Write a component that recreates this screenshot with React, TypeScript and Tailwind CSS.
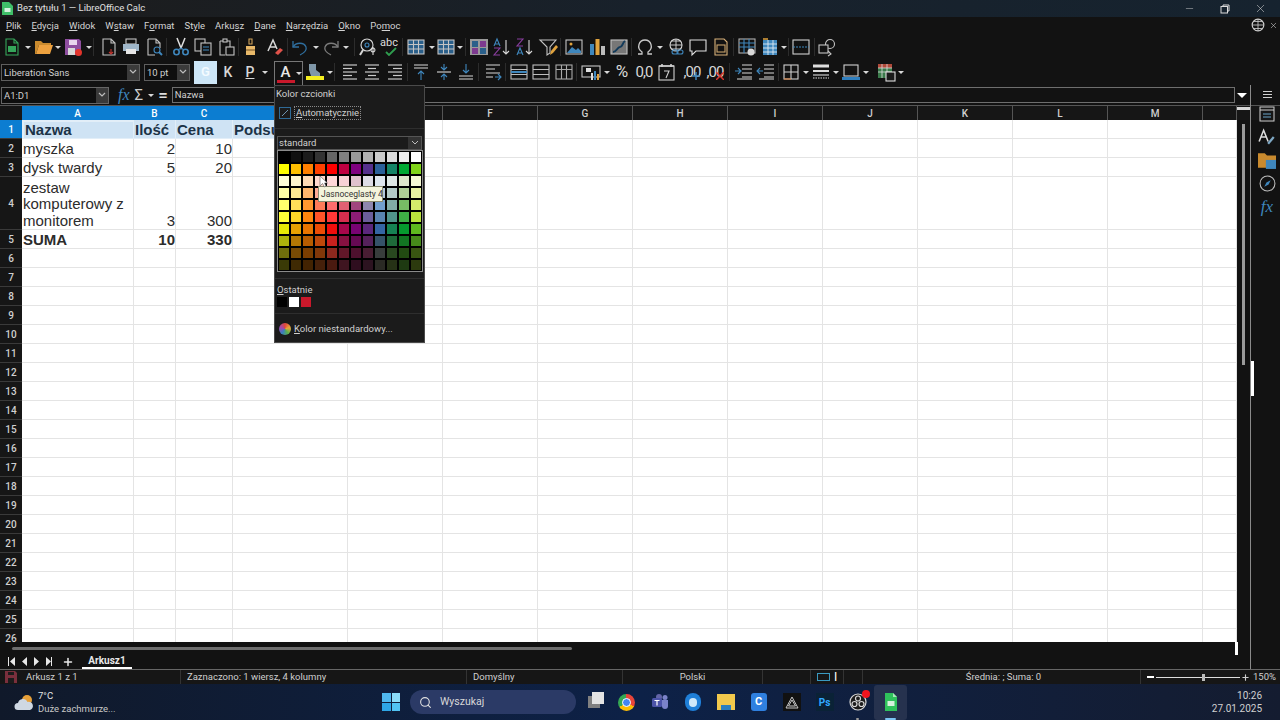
import type { ReactNode } from 'react'
import { Minus, X, Plus, Search } from 'lucide-react'

const ui = "font-['Roboto',sans-serif]"
const sheet = "font-['Liberation_Sans',sans-serif]"

const L = '#c4c4c4'
const B = '#3f87bd'

function Ico({ children, size = 20 }: { children: ReactNode; size?: number }) {
  return (
    <svg width={size} height={size} viewBox="0 0 20 20" fill="none" strokeWidth="1.1" stroke={L}>
      {children}
    </svg>
  )
}

function Tool({ className = '', children }: { className?: string; children: ReactNode }) {
  return <div className={`w-[22px] h-[22px] shrink-0 flex items-center justify-center ${className}`}>{children}</div>
}

function Arrow({ className = '' }: { className?: string }) {
  return (
    <div className={`w-[6px] h-[22px] shrink-0 flex items-center justify-center ${className}`}>
      <div className="w-0 h-0 border-l-[3px] border-r-[3px] border-t-[3px] border-l-transparent border-r-transparent border-t-[#d8d8d8]" />
    </div>
  )
}

function Sep({ className = '' }: { className?: string }) {
  return <div className={`w-px h-[18px] mx-px shrink-0 bg-[#2c2c2c] ${className}`} />
}

const Doc = ({ c = L }: { c?: string }) => <path d="M4 2h8l4 4v12H4z M12 2v4h4" stroke={c} />

function Lines({ rows }: { rows: [number, number][] }) {
  return (
    <Ico>
      {rows.map(([a, b], i) => (
        <path key={i} d={`M${a} ${3 + i * 3.5}H${b}`} strokeWidth="1.2" stroke="#c8c8c8" />
      ))}
    </Ico>
  )
}

function TableIco({ head = L, fill }: { head?: string; fill?: string }) {
  return (
    <Ico>
      {fill && <rect x="2" y="3" width="16" height="14" fill={fill} stroke="none" />}
      <rect x="2" y="3" width="16" height="14" stroke={L} />
      <path d="M2 7.5h16M2 12h16M7.5 3v14M12.5 3v14" stroke={head} />
    </Ico>
  )
}

const swatches = [
  ['#000000', '#111111', '#1c1c1c', '#333333', '#666666', '#808080', '#999999', '#b2b2b2', '#cccccc', '#dddddd', '#eeeeee', '#ffffff'],
  ['#ffff00', '#ffbf00', '#ff8000', '#ff4000', '#ff0000', '#bf0041', '#800080', '#55308d', '#2a6099', '#158466', '#00a933', '#81d41a'],
  ['#ffffd7', '#fff5ce', '#ffdbb6', '#ffd8ce', '#ffd7d7', '#f7d1d5', '#e0c2cd', '#dedce6', '#dee6ef', '#dee7e5', '#dde8cb', '#f6f9d4'],
  ['#ffffa6', '#ffe994', '#ffb66c', '#ffaa95', '#ffa6a6', '#ec9ba4', '#bf819e', '#b7b3ca', '#b4c7dc', '#b3cac7', '#afd095', '#e8f2a1'],
  ['#ffff6d', '#ffde59', '#ff972f', '#ff7b59', '#ff6d6d', '#e16173', '#a1467e', '#8e86ae', '#729fcf', '#81aca6', '#77bc65', '#d4ea6b'],
  ['#ffff38', '#ffd428', '#ff860d', '#ff5429', '#ff3838', '#d62e4e', '#8d1d75', '#6b5e9b', '#5983b0', '#50938a', '#3faf46', '#bbe33d'],
  ['#e6e905', '#e8a202', '#ea7500', '#ed4c05', '#f10d0c', '#a7074b', '#780373', '#5b277d', '#3465a4', '#168253', '#069a2e', '#5eb91e'],
  ['#acb20c', '#b47804', '#b85c00', '#be480a', '#c9211e', '#861141', '#650953', '#55215b', '#355269', '#1e6a39', '#127622', '#468a1a'],
  ['#706e0c', '#784b04', '#7b3d00', '#813709', '#8d281e', '#611729', '#4e102d', '#481d32', '#383d3c', '#28471f', '#224b12', '#395511'],
  ['#3a3a06', '#3f2a03', '#422302', '#45200a', '#4a1a10', '#3f1520', '#2f0e1f', '#2c1320', '#2a2a24', '#263216', '#1e3a12', '#2c3a0e'],
]

const colWidths = ['w-[112px]', 'w-[42px]', 'w-[57px]', 'w-[115px]', 'w-[95px]', 'w-[95px]', 'w-[95px]', 'w-[95px]', 'w-[95px]', 'w-[95px]', 'w-[95px]', 'w-[95px]', 'w-[95px]', 'w-[34px]']
const colNames = ['A', 'B', 'C', 'D', 'E', 'F', 'G', 'H', 'I', 'J', 'K', 'L', 'M', '']

type Row = { n: number; h: string; cells?: string[]; bold?: boolean }
const rows: Row[] = [
  { n: 1, h: 'h-[19px]', cells: ['Nazwa', 'Ilość', 'Cena', 'Podsumowanie'], bold: true },
  { n: 2, h: 'h-[19px]', cells: ['myszka', '2', '10'] },
  { n: 3, h: 'h-[19px]', cells: ['dysk twardy', '5', '20'] },
  { n: 4, h: 'h-[53px]', cells: ['zestaw komputerowy z monitorem', '3', '300'] },
  { n: 5, h: 'h-[19px]', cells: ['SUMA', '10', '330'], bold: true },
  ...Array.from({ length: 21 }, (_, i) => ({ n: i + 6, h: 'h-[19px]' })),
]

function Combo({ className, value, btn }: { className: string; value: string; btn: string }) {
  return (
    <div className={`h-[17px] flex border border-[#5e5e5e] bg-[#0e0e0e] text-[9.5px] text-[#d0d0d0] leading-[15px] ${className}`}>
      <div className="flex-1 pl-[2px] overflow-hidden whitespace-nowrap">{value}</div>
      <div className={`${btn} bg-[#3a3a3a] flex items-center justify-center`}>
        <svg width="8" height="6" viewBox="0 0 8 6" fill="none" stroke="#bdbdbd" strokeWidth="1.2"><path d="M1 1l3 3 3-3" /></svg>
      </div>
    </div>
  )
}

function ToolbarOne() {
  return (
    <div className="h-[24px] pl-px flex items-center bg-[#121212]">
      <Tool>
        <Ico><Doc c="#35a55a" /><rect x="6" y="9" width="8" height="6" fill="#35a55a" stroke="none" /></Ico>
      </Tool>
      <Arrow className="ml-[2px]" />
      <Tool className="ml-[2px]">
        <Ico><path d="M1 4h6l2 2h8v2H5L2 17H1z" fill="#c98a2e" stroke="none" /><path d="M5 8h14l-3 9H2z" fill="#eda13f" stroke="none" /></Ico>
      </Tool>
      <Arrow />
      <Tool className="ml-px">
        <Ico>
          <path d="M2 2h14l2 2v14H2z" fill="#8f4fa0" stroke="none" />
          <rect x="6" y="3" width="8" height="5" fill="#e9d7ee" stroke="none" />
          <rect x="5" y="11" width="7" height="7" fill="#d8d8d8" stroke="none" />
          <circle cx="15.5" cy="15.5" r="3.5" fill="#e2342b" stroke="none" />
        </Ico>
      </Tool>
      <Arrow className="ml-[2px]" />
      <Sep />
      <Tool className="ml-[3px]">
        <Ico><Doc /><path d="M12 12v5M10 15l2 2 2-2" stroke="#c2352f" /></Ico>
      </Tool>
      <Tool>
        <Ico>
          <rect x="5" y="2" width="10" height="5" stroke={L} />
          <path d="M2 7h16v7h-3v-2H5v2H2z" fill="#9fb6c9" stroke="none" />
          <rect x="5" y="12" width="10" height="5" fill="#e6e6e6" stroke="none" />
        </Ico>
      </Tool>
      <Tool className="ml-px">
        <Ico><path d="M4 2h8l4 4v5M4 2v16h7 M12 2v4h4" /><circle cx="13" cy="13" r="3" stroke={B} /><path d="M15 15l3 3" stroke={B} strokeWidth="2" /></Ico>
      </Tool>
      <Sep />
      <Tool className="ml-[2px]">
        <Ico>
          <path d="M6 1l4 10 4-10" stroke="#e0e0e0" strokeWidth="1.5" />
          <circle cx="5.5" cy="15" r="2.7" stroke={B} strokeWidth="1.6" />
          <circle cx="14.5" cy="15" r="2.7" stroke={B} strokeWidth="1.6" />
          <path d="M10 11l-3 2M10 11l3 2" stroke={B} />
        </Ico>
      </Tool>
      <Tool>
        <Ico>
          <rect x="2" y="2" width="10" height="12" />
          <rect x="8" y="6" width="10" height="12" fill="#121212" />
          <path d="M10 10h6M10 13h6" stroke={B} />
        </Ico>
      </Tool>
      <Tool className="ml-px">
        <Ico>
          <path d="M4 4h10v6M4 4v14h5" />
          <rect x="7" y="2" width="4" height="3" fill="#121212" />
          <rect x="10" y="10" width="8" height="8" fill="#121212" />
        </Ico>
      </Tool>
      <Sep />
      <Tool>
        <Ico>
          <path d="M8 2h3v5H8z" stroke="#cfa25a" />
          <path d="M5 9h9v9H5z" fill="#e8b96a" stroke="none" />
          <path d="M5 13h9" stroke="#7a5a2a" />
        </Ico>
      </Tool>
      <Tool className="ml-[2px]">
        <Ico>
          <path d="M3 14L8 3l4 9M5 10h6" stroke="#d8d8d8" strokeWidth="1.5" />
          <path d="M10 16l5-5 3 2-5 5z" fill="#e0524a" stroke="none" />
        </Ico>
      </Tool>
      <Sep />
      <Tool>
        <Ico><path d="M3 4v6h6" stroke="#2f6f9f" strokeWidth="1.3" /><path d="M3 10c3-5 11-5 13 0 1 3-2 6-6 8" stroke="#2f6f9f" strokeWidth="1.3" /></Ico>
      </Tool>
      <Arrow className="ml-[2px]" />
      <Tool className="ml-px">
        <Ico><path d="M17 4v6h-6" stroke="#7c7c7c" strokeWidth="1.3" /><path d="M17 10c-3-5-11-5-13 0-1 3 2 6 6 8" stroke="#7c7c7c" strokeWidth="1.3" /></Ico>
      </Tool>
      <Arrow className="ml-px" />
      <Sep className="ml-[5px]" />
      <Tool className="ml-px">
        <Ico>
          <circle cx="9" cy="8" r="6" stroke="#d8d8d8" />
          <path d="M5 13l-3 5" strokeWidth="2" stroke="#d8d8d8" />
          <circle cx="9" cy="8" r="2" stroke={B} />
          <path d="M15 10v8M15 15a2 2 0 10-.1 0" stroke="#d8d8d8" />
        </Ico>
      </Tool>
      <Tool>
        <div className="relative w-[20px] h-[20px]">
          <span className={`${ui} absolute -top-[1px] left-0 text-[11px] text-[#dddddd] leading-[14px]`}>abc</span>
          <svg className="absolute left-[5px] top-[10px]" width="12" height="9" viewBox="0 0 12 9" fill="none" stroke="#2f9e4f" strokeWidth="1.8"><path d="M1 5l3 3 7-7" /></svg>
        </div>
      </Tool>
      <Sep className="ml-px" />
      <Tool className="ml-px"><TableIco fill="#2a5f8a" /></Tool>
      <Arrow className="ml-[2px]" />
      <Tool><TableIco fill="#2a5f8a" /></Tool>
      <Arrow />
      <Sep className="ml-[2px]" />
      <Tool className="ml-px">
        <Ico>
          <rect x="1" y="2" width="18" height="16" fill="#9a9a9a" stroke="none" />
          <rect x="3" y="4" width="6" height="6" fill="#2a5f8a" stroke="none" />
          <rect x="11" y="4" width="6" height="6" fill="#7d3a8f" stroke="none" />
          <rect x="3" y="11" width="6" height="6" fill="#7d3a8f" stroke="none" />
          <rect x="11" y="11" width="6" height="6" fill="#2a5f8a" stroke="none" />
        </Ico>
      </Tool>
      <Tool className="ml-px">
        <Ico>
          <path d="M2 9l3-7 3 7M3 7h4" stroke={B} />
          <path d="M2 11h6l-6 7h6" stroke="#8a3ea0" />
          <path d="M14 3v14M11 14l3 3 3-3" stroke="#d8d8d8" />
        </Ico>
      </Tool>
      <Tool className="ml-px">
        <Ico>
          <path d="M2 2h6L2 9h6" stroke="#8a3ea0" />
          <path d="M2 18l3-7 3 7M3 16h4" stroke={B} />
          <path d="M14 3v14M11 14l3 3 3-3" stroke="#d8d8d8" />
        </Ico>
      </Tool>
      <Tool className="ml-px">
        <Ico>
          <path d="M2 3h16l-6 7v6l-3 2v-8z" stroke="#c4c4c4" />
          <path d="M18 8l-5 6-1 4 3-2 5-6z" fill="#e0a33e" stroke="none" />
        </Ico>
      </Tool>
      <Sep />
      <Tool className="ml-px">
        <Ico>
          <rect x="2" y="3" width="16" height="14" stroke="#c4c4c4" />
          <path d="M3 16l5-6 4 3 2-2 3 3v2H3z" fill={B} stroke="none" />
          <circle cx="7" cy="7" r="1.5" fill="#e0a33e" stroke="none" />
        </Ico>
      </Tool>
      <Tool className="ml-px">
        <Ico>
          <rect x="3" y="7" width="4" height="11" fill={B} stroke="none" />
          <rect x="8.5" y="2" width="4" height="16" fill="#e0a33e" stroke="none" />
          <rect x="14" y="9" width="4" height="9" fill="#bcbcbc" stroke="none" />
        </Ico>
      </Tool>
      <Tool>
        <Ico>
          <rect x="2" y="3" width="16" height="14" fill="#777777" stroke="#c4c4c4" />
          <path d="M4 15c4 0 4-5 7-5s2-4 5-6" stroke="#123a5a" strokeWidth="2" />
        </Ico>
      </Tool>
      <Sep />
      <Tool className="ml-px">
        <Ico><path d="M3 17h4v-2c-6-4-3-12 3-12s9 8 3 12v2h4" stroke="#c9c9c9" strokeWidth="1.3" /></Ico>
      </Tool>
      <Arrow className="ml-px" />
      <Tool className="ml-[2px]">
        <Ico>
          <circle cx="10" cy="8" r="6" stroke="#d8d8d8" />
          <path d="M4 8h12M10 2v12M6 4h8M6 12h8" stroke="#d8d8d8" strokeWidth="0.9" />
          <rect x="6" y="13" width="6" height="4" rx="2" stroke={B} />
          <rect x="11" y="13" width="6" height="4" rx="2" stroke={B} />
        </Ico>
      </Tool>
      <Tool>
        <Ico><path d="M2 3h16v11H8l-4 4v-4H2z" stroke="#e0e0e0" /></Ico>
      </Tool>
      <Tool className="ml-px">
        <Ico><path d="M4 2h9l3 3v13H4z" stroke="#d9b27a" /><rect x="6" y="8" width="8" height="7" fill="#111111" stroke="#c9a26a" /></Ico>
      </Tool>
      <Sep />
      <Tool className="ml-px">
        <Ico>
          <rect x="2" y="2" width="16" height="14" stroke="#b0b0b0" />
          <path d="M2 6h16M2 10h16M7 2v14M12 2v14" stroke={B} />
          <circle cx="14" cy="15" r="3.5" fill="#d8d8d8" stroke="none" />
        </Ico>
      </Tool>
      <Tool className="ml-px">
        <Ico>
          <rect x="3" y="3" width="14" height="15" fill="#3f87bd" stroke="none" />
          <path d="M3 7h14M3 11h14M3 15h14M8 3v15M13 3v15" stroke="#dfe9f0" strokeWidth="0.9" />
          <path d="M3 2h5" stroke="#e0a33e" strokeWidth="1.5" />
        </Ico>
      </Tool>
      <Arrow />
      <Sep className="ml-px" />
      <Tool>
        <Ico><rect x="2" y="3" width="16" height="14" stroke="#d0d0d0" /><path d="M2 10h16" stroke={B} strokeDasharray="2 1" /></Ico>
      </Tool>
      <Sep className="ml-[2px]" />
      <Tool>
        <Ico><circle cx="13" cy="7" r="4.5" /><rect x="2" y="8" width="9" height="8" fill="#121212" /><path d="M11 14l3 3-3 2" /></Ico>
      </Tool>
    </div>
  )
}

const Merge = ({ mid }: { mid?: string }) => (
  <Ico>
    <rect x="2" y="3" width="16" height="14" stroke="#bdbdbd" />
    <path d="M2 7.5h16M2 12.5h16" stroke="#bdbdbd" />
    {mid && <path d="M2 10h16" stroke={mid} strokeWidth="2" />}
  </Ico>
)

function ToolbarTwo() {
  return (
    <div className={`${ui} h-[26px] pl-px flex items-center bg-[#121212]`}>
      <Combo className="w-[139px]" value="Liberation Sans" btn="w-[12px]" />
      <Combo className="w-[46px] ml-[4px]" value="10 pt" btn="w-[12px]" />
      <div className="w-[23px] h-[23px] ml-[4px] bg-[#cde6f7] flex items-center justify-center text-[13px] font-semibold text-[#f4fbff]">G</div>
      <Tool><span className="text-[14px] font-medium text-[#d8d8d8]">K</span></Tool>
      <Tool><span className="text-[14px] font-medium text-[#d8d8d8] underline">P</span></Tool>
      <Arrow className="ml-px" />
      <div className="w-[29px] h-[24px] ml-[6px] mt-[2px] border-t border-l border-r border-[#777777] flex items-center pl-[1px] shrink-0">
        <div className="w-[20px] flex flex-col items-center">
          <span className="text-[15px] leading-[14px] font-medium text-[#e8e8e8]">A</span>
          <div className="w-[18px] h-[3px] mt-[1px] bg-[#c9182b]" />
        </div>
        <Arrow className="ml-[1px]" />
      </div>
      <Tool className="ml-px">
        <Ico>
          <path d="M4 2h7v6l4 3v3H6L4 8z" fill="#7f97a8" stroke="none" />
          <rect x="1" y="14" width="18" height="4" fill="#f4ee1f" stroke="none" />
        </Ico>
      </Tool>
      <Arrow className="ml-[1px]" />
      <Sep className="ml-px" />
      <Tool className="ml-[3px]"><Lines rows={[[3, 17], [3, 12], [3, 17], [3, 12], [3, 17]]} /></Tool>
      <Tool><Lines rows={[[3, 17], [6, 14], [3, 17], [6, 14], [3, 17]]} /></Tool>
      <Tool className="ml-px"><Lines rows={[[3, 17], [8, 17], [3, 17], [8, 17], [3, 17]]} /></Tool>
      <Sep className="ml-[1px]" />
      <Tool className="ml-px">
        <Ico><path d="M3 3h14M3 6h14" stroke="#d8d8d8" /><path d="M10 18V9M7 12l3-3 3 3" stroke={B} /></Ico>
      </Tool>
      <Tool className="ml-px">
        <Ico><path d="M3 10h14" stroke="#d8d8d8" /><path d="M10 2v6M7 5l3 3 3-3M10 18v-6M7 15l3-3 3 3" stroke={B} /></Ico>
      </Tool>
      <Tool>
        <Ico><path d="M3 14h14M3 17h14" stroke="#d8d8d8" /><path d="M10 2v9M7 8l3 3 3-3" stroke={B} /></Ico>
      </Tool>
      <Sep className="ml-px" />
      <Tool className="ml-[2px]">
        <Ico><path d="M3 3h14M3 7h9M3 11h14M3 15h7" stroke="#d8d8d8" strokeWidth="1.2" /><path d="M12 15h6M15 12l3 3-3 3" stroke={B} /></Ico>
      </Tool>
      <Sep className="ml-px" />
      <Tool className="ml-px"><Merge mid="#3f87bd" /></Tool>
      <Tool><Merge /></Tool>
      <Tool className="ml-px">
        <Ico>
          <rect x="2" y="3" width="16" height="14" stroke="#a8a8a8" />
          <path d="M2 7.5h16M7.5 3v14M12.5 3v14" stroke="#a8a8a8" />
        </Ico>
      </Tool>
      <Sep className="ml-px" />
      <Tool className="ml-[2px]">
        <Ico>
          <rect x="1" y="4" width="18" height="11" stroke="#c4c4c4" />
          <rect x="5" y="6" width="5" height="4" fill="#e0e0e0" stroke="none" />
          <rect x="10" y="11" width="2" height="7" fill="#e0e0e0" stroke="none" />
          <rect x="13" y="9" width="2" height="9" fill={B} stroke="none" />
          <rect x="16" y="12" width="2" height="6" fill="#e0a33e" stroke="none" />
        </Ico>
      </Tool>
      <Arrow className="ml-[2px]" />
      <Tool className="ml-px"><span className="text-[17px] text-[#d8d8d8]">%</span></Tool>
      <Tool><span className="text-[15px] tracking-[-1px] text-[#d8d8d8]">0,0</span></Tool>
      <Tool>
        <Ico>
          <rect x="3" y="4" width="15" height="14" stroke="#cfcfcf" />
          <path d="M3 4h15M6 2v3M15 2v3" stroke="#cfcfcf" strokeWidth="1.6" />
          <path d="M8 9h5l-3 7" stroke="#cfcfcf" />
        </Ico>
      </Tool>
      <Tool className="ml-[4px]">
        <div className="relative">
          <span className="text-[15px] tracking-[-1px] text-[#d8d8d8]">,00</span>
          <svg className="absolute right-0 top-[12px]" width="8" height="8" viewBox="0 0 8 8" stroke={B} strokeWidth="1.5"><path d="M4 0v8M0 4h8" /></svg>
        </div>
      </Tool>
      <Tool className="ml-px">
        <div className="relative">
          <span className="text-[15px] tracking-[-1px] text-[#d8d8d8]">,00</span>
          <svg className="absolute -right-px top-[12px]" width="8" height="8" viewBox="0 0 8 8" stroke="#d9362d" strokeWidth="1.5"><path d="M0 0l8 8M8 0L0 8" /></svg>
        </div>
      </Tool>
      <Sep className="ml-[3px]" />
      <Tool className="ml-[2px]">
        <Ico><path d="M8 3h10M8 7h10M8 11h10M8 15h10M3 17h15" stroke="#d8d8d8" /><path d="M1 9h5M4 6l3 3-3 3" stroke={B} /></Ico>
      </Tool>
      <Tool>
        <Ico><path d="M8 3h10M8 7h10M8 11h10M8 15h10M3 17h15" stroke="#d8d8d8" /><path d="M7 9H1M4 6L1 9l3 3" stroke={B} /></Ico>
      </Tool>
      <Sep className="ml-px" />
      <Tool>
        <Ico><rect x="3" y="3" width="14" height="14" stroke="#d0d0d0" /><path d="M10 3v14M3 10h14" stroke="#d0d0d0" /><path d="M3 17h7" stroke="#d27a3a" /></Ico>
      </Tool>
      <Arrow className="ml-px" />
      <Tool className="ml-px">
        <Ico><path d="M2 4h16" strokeWidth="3" stroke="#dedede" /><path d="M2 9h16" strokeWidth="2" stroke="#dedede" /><path d="M2 13h16" stroke="#dedede" /><path d="M2 16h16" strokeDasharray="1.5 1" stroke="#dedede" /></Ico>
      </Tool>
      <Arrow className="ml-px" />
      <Tool className="ml-[1px]">
        <Ico><rect x="3" y="3" width="14" height="11" stroke="#d0d0d0" /><rect x="1" y="15" width="18" height="3" fill="#2f7fbf" stroke="none" /></Ico>
      </Tool>
      <Arrow className="ml-[1px]" />
      <Tool className="ml-[6px]">
        <Ico>
          <rect x="2" y="2" width="14" height="14" fill="#3a7a4a" stroke="none" />
          <path d="M2 2h14v4H2z" fill="#b04a3a" stroke="none" />
          <path d="M2 6h14M2 10h14M6 2v14M11 2v14" stroke="#dddddd" strokeWidth="0.8" />
          <rect x="10" y="10" width="9" height="9" fill="#1a1a1a" stroke="#dddddd" />
        </Ico>
      </Tool>
      <Arrow className="ml-[1px]" />
    </div>
  )
}

function Sheet() {
  return (
    <div className="w-[1237px] h-[522px] overflow-hidden bg-white">
      {rows.map((r) => (
        <div key={r.n} className={`${r.h} flex`}>
          <div
            className={`w-[22px] shrink-0 flex items-center justify-center text-[10px] font-medium border-b border-[#3a3a3a] ${ui} ${
              r.n === 1 ? 'bg-[#0c7dd1] text-white' : 'bg-[#161616] text-[#d0d0d0]'
            }`}
          >
            {r.n}
          </div>
          {colWidths.map((w, i) => {
            const text = r.cells?.[i]
            const selected = r.n === 1 && i < 4
            const wrap = r.n === 4 && i === 0
            return (
              <div
                key={i}
                className={`${w} shrink-0 flex items-end border-r border-b ${sheet} text-[15px] overflow-hidden ${
                  wrap ? 'whitespace-normal leading-[16.5px] pl-px' : 'whitespace-nowrap leading-[17.5px] pl-px'
                } ${selected ? 'bg-[#cfe3f4] text-[#1c3347] border-[#e2eef8]' : 'text-[#2c2c2c] border-[#e4e4e4]'} ${r.bold ? 'font-bold' : ''} ${
                  (i === 1 || i === 2) && r.n !== 1 ? 'justify-end' : ''
                } ${r.n === 1 && i === 0 ? 'border-2 border-[#1b76c0]' : ''}`}
              >
                {text}
              </div>
            )
          })}
        </div>
      ))}
    </div>
  )
}

function ColorPopup() {
  return (
    <div className={`${ui} absolute left-[274px] top-[85px] w-[151px] h-[258px] bg-[#1b1b1b] border border-[#4a4a4a] text-[9.5px] text-[#d0d0d0] leading-[14px]`}>
      <div className="pl-px pt-px">Kolor czcionki</div>
      <div className="mt-[5px] ml-[4px] flex items-center gap-[3px]">
        <div className="w-[12px] h-[12px] border border-[#2f6a96] flex items-center justify-center">
          <svg width="8" height="8" viewBox="0 0 8 8" stroke="#6e94b0"><path d="M1 7l6-6" /></svg>
        </div>
        <span className="px-px border border-dotted border-[#8a8a8a] leading-[12px]"><u>A</u>utomatycznie</span>
      </div>
      <div className="mt-[8px] h-px bg-[#2e2e2e]" />
      <div className="mt-[7px] mx-[2px] h-[14px] flex border border-[#555555] leading-[12px]">
        <div className="flex-1 pl-px">standard</div>
        <div className="w-[13px] bg-[#333333] flex items-center justify-center">
          <svg width="8" height="6" viewBox="0 0 8 6" fill="none" stroke="#bdbdbd"><path d="M1 1l3 3 3-3" /></svg>
        </div>
      </div>
      <div className="mx-[2px] w-[146px] p-px border border-[#8a8a8a] bg-black grid grid-cols-12 gap-[2px]">
        {swatches.flat().map((c, i) => (
          <div key={i} className="h-[10px]" style={{ backgroundColor: c }} />
        ))}
      </div>
      <div className="mt-[6px] h-px bg-[#2e2e2e]" />
      <div className="mt-[4px] pl-[2px]"><u>O</u>statnie</div>
      <div className="ml-[2px] flex gap-[2px]">
        <div className="w-[10px] h-[10px] bg-black" />
        <div className="w-[10px] h-[10px] bg-white" />
        <div className="w-[10px] h-[10px] bg-[#c9182b]" />
      </div>
      <div className="mt-[6px] h-px bg-[#2e2e2e]" />
      <div className="mt-[8px] ml-[4px] flex items-center gap-[3px]">
        <div className="w-[12px] h-[12px] rounded-full bg-[conic-gradient(#e0453a,#e8a53a,#5ab04a,#3a7fc0,#a04ab0,#e0453a)]" />
        <span><u>K</u>olor niestandardowy...</span>
      </div>
      <div className="absolute left-[43px] top-[100px] w-[65px] h-[16px] pl-[2px] bg-[#f4f4dc] border border-[#8a8a70] text-[#333333] text-[8.5px] leading-[14px] whitespace-nowrap">
        Jasnoceglasty 4
      </div>
      <svg className="absolute left-[44px] top-[89px]" width="9" height="13" viewBox="0 0 9 13">
        <path d="M1 1v10l2.5-2.5L5.5 12 7 11 5.5 8H8.5z" fill="#ffffff" stroke="#555555" strokeWidth="0.6" />
      </svg>
    </div>
  )
}

function TaskIcon({ className = '', children }: { className?: string; children: ReactNode }) {
  return <div className={`w-[33px] h-[35px] flex items-center justify-center shrink-0 relative ${className}`}>{children}</div>
}

function Taskbar() {
  return (
    <div className={`${ui} h-[36px] flex items-center bg-gradient-to-r from-[#10192a] via-[#0d2147] to-[#141c30] text-[#e6e6e6]`}>
      <div className="w-[376px] pl-[14px] flex items-center shrink-0">
        <svg width="20" height="18" viewBox="0 0 20 18">
          <circle cx="13" cy="7" r="5" fill="#e8a13a" />
          <path d="M4 17a3.5 3.5 0 010-7 5 5 0 019.5-1A4 4 0 0116 17z" fill="#cfd8e3" />
        </svg>
        <div className="ml-[4px] text-[9.5px] leading-[13px]">
          <div>7°C</div>
          <div className="text-[#c8c8c8]">Duże zachmurze...</div>
        </div>
      </div>
      <div className="w-[18px] h-[18px] ml-[6px] grid grid-cols-2 gap-[1px] shrink-0">
        <div className="bg-[#4fb8ee]" />
        <div className="bg-[#8bdcf8]" />
        <div className="bg-[#2ea6e6]" />
        <div className="bg-[#52c3f2]" />
      </div>
      <div className="w-[166px] h-[24px] ml-[10px] rounded-full bg-[#2b3a66] flex items-center pl-[9px] text-[10.5px] text-[#d8d8d8] shrink-0">
        <Search size={13} strokeWidth={2} className="text-[#e0e0e0]" />
        <span className="ml-[8px]">Wyszukaj</span>
      </div>
      <TaskIcon className="ml-px">
        <div className="w-[12px] h-[12px] bg-[#808080] relative">
          <div className="absolute -top-[4px] left-[4px] w-[12px] h-[12px] bg-[#e4e4e4]" />
        </div>
      </TaskIcon>
      <TaskIcon>
        <div className="w-[17px] h-[17px] rounded-full bg-[conic-gradient(#e8453a_0_33%,#fbbc05_33%_66%,#34a853_66%)] flex items-center justify-center">
          <div className="w-[9px] h-[9px] rounded-full bg-[#4285f4] border border-white" />
        </div>
      </TaskIcon>
      <TaskIcon>
        <svg width="18" height="16" viewBox="0 0 18 16" fill="#6264a7">
          <circle cx="14" cy="3.5" r="2.5" fill="#7b83c9" />
          <path d="M11 6h6v6a3 3 0 01-6 0z" fill="#7b83c9" />
          <circle cx="8" cy="3" r="3" />
          <rect x="1" y="4" width="10" height="9" rx="1.5" fill="#4b53a8" />
          <path d="M3.5 6.5h5M6 6.5v5" stroke="#ffffff" strokeWidth="1.2" />
        </svg>
      </TaskIcon>
      <TaskIcon>
        <div className="w-[16px] h-[18px] rounded-full bg-[#1f7fd8] flex items-center justify-center">
          <div className="w-[8px] h-[9px] rounded-full bg-[#cfe8fa]" />
        </div>
      </TaskIcon>
      <TaskIcon>
        <div className="w-[18px] h-[16px] bg-[#f2c94c] relative">
          <div className="absolute bottom-0 left-[4px] w-[10px] h-[5px] bg-[#2a7fc0]" />
        </div>
      </TaskIcon>
      <TaskIcon>
        <div className="w-[16px] h-[18px] rounded-[3px] bg-[#2f80e0] flex items-center justify-center text-[11px] font-bold text-white">C</div>
      </TaskIcon>
      <TaskIcon>
        <div className="w-[18px] h-[18px] bg-[#111111] flex items-center justify-center">
          <svg width="14" height="13" viewBox="0 0 14 13" fill="none" stroke="#c8c8c8"><path d="M7 1l6 11H1zM7 4l3.5 6h-7z" /></svg>
        </div>
      </TaskIcon>
      <TaskIcon>
        <div className="w-[18px] h-[18px] bg-[#0a2236] flex items-center justify-center text-[10px] font-bold text-[#31a8ff]">Ps</div>
      </TaskIcon>
      <TaskIcon>
        <svg width="18" height="18" viewBox="0 0 18 18" fill="none" stroke="#d8d8d8" strokeWidth="1.2">
          <circle cx="9" cy="9" r="8" fill="#1c1c1c" />
          <circle cx="9" cy="5.5" r="2.5" />
          <circle cx="5.5" cy="11" r="2.5" />
          <circle cx="12.5" cy="11" r="2.5" />
        </svg>
        <div className="absolute right-[4px] top-[5px] w-[8px] h-[8px] rounded-full bg-[#f0141e]" />
        <div className="absolute bottom-0 w-[3px] h-[2px] rounded-full bg-[#9a9a9a]" />
      </TaskIcon>
      <TaskIcon className="bg-[#26324e] rounded-[3px]">
        <svg width="14" height="20" viewBox="0 0 14 20">
          <path d="M1 1h8l4 4v14H1z" fill="#2fc25b" />
          <path d="M9 1l4 4H9z" fill="#a8e8b8" />
          <rect x="3.5" y="9" width="7" height="5" fill="#d6f2de" />
        </svg>
        <div className="absolute bottom-0 w-[11px] h-[2px] rounded-full bg-[#7cc4f2]" />
      </TaskIcon>
      <div className="ml-auto mr-[18px] text-right text-[10px] leading-[13px] text-[#d0d0d0]">
        <div>10:26</div>
        <div>27.01.2025</div>
      </div>
    </div>
  )
}

export default function App() {
  return (
    <div className={`${ui} relative w-[1280px] h-[720px] flex flex-col overflow-hidden bg-[#121212] text-[#d8d8d8]`}>
      {/* title bar */}
      <div className="h-[17px] flex items-center bg-gradient-to-r from-[#1c1c1c] via-[#18212b] to-[#16232f] text-[9.5px]">
        <svg className="ml-[2px]" width="11" height="13" viewBox="0 0 11 13">
          <path d="M0 0h7l4 4v9H0z" fill="#3fbf68" />
          <rect x="2.5" y="6" width="6" height="4" fill="#d6f2de" />
        </svg>
        <span className="ml-[4px] text-[#e0e0e0]">Bez tytułu 1 — LibreOffice Calc</span>
        <div className="ml-auto flex items-center text-[#dcdcdc]">
          <Minus size={11} strokeWidth={1} />
          <svg className="ml-[25px]" width="10" height="10" viewBox="0 0 10 10" fill="none" stroke="#dcdcdc"><rect x="1" y="2.5" width="6.5" height="6.5" /><path d="M3 2.5V1h6v6H7.5" /></svg>
          <X className="ml-[24px] mr-[13px]" size={13} strokeWidth={1} />
        </div>
      </div>
      {/* menu */}
      <div className="h-[18px] pl-[6px] flex items-center gap-[10px] bg-[#121212] text-[9.5px] text-[#d4d4d4] relative">
        <span><u>P</u>lik</span>
        <span><u>E</u>dycja</span>
        <span><u>W</u>idok</span>
        <span>W<u>s</u>taw</span>
        <span>F<u>o</u>rmat</span>
        <span>St<u>y</u>le</span>
        <span>Arku<u>s</u>z</span>
        <span><u>D</u>ane</span>
        <span><u>N</u>arzędzia</span>
        <span><u>O</u>kno</span>
        <span>Po<u>m</u>oc</span>
        <div className="absolute right-[2px] top-px flex items-center gap-[4px]">
          <svg width="14" height="14" viewBox="0 0 12 12" fill="none" stroke="#cfcfcf"><circle cx="6" cy="6" r="5" /><path d="M1 6h10M6 1v10M2 3h8M2 9h8" strokeWidth="0.7" /></svg>
          <X size={9} strokeWidth={1.5} />
        </div>
      </div>
      <ToolbarOne />
      <ToolbarTwo />
      {/* formula bar */}
      <div className="h-[20px] pl-[1px] flex items-center bg-[#121212] text-[9.5px] shrink-0">
        <Combo className="w-[108px] border-[#666666]" value="A1:D1" btn="w-[12px]" />
        <span className="ml-[9px] font-['Liberation_Serif',serif] italic text-[16px] leading-[16px] text-[#3f87bd]">fx</span>
        <span className="ml-[5px] text-[15px] leading-[16px] text-[#cfcfcf]">Σ</span>
        <Arrow className="ml-[5px]" />
        <span className="ml-[4px] text-[17px] leading-[16px] font-medium text-[#dddddd]">=</span>
        <div className="ml-[4px] w-[1063px] h-[16px] border border-[#6e6e6e] pl-[2px] leading-[14px] text-[#d0d0d0]">Nazwa</div>
        <div className="ml-[2px] w-0 h-0 border-l-[5px] border-r-[5px] border-t-[5px] border-l-transparent border-r-transparent border-t-white" />
      </div>
      {/* column headers */}
      <div className="h-[15px] flex bg-[#161616] text-[10px] text-[#d0d0d0] shrink-0 border-t border-[#555555]">
        <div className="w-[22px] shrink-0" />
        {colWidths.map((w, i) => (
          <div
            key={i}
            className={`${w} shrink-0 flex items-center justify-center border-r font-medium ${
              i < 4 ? 'bg-[#0c7dd1] text-white border-[#0c7dd1]' : 'border-[#555555]'
            }`}
          >
            {colNames[i]}
          </div>
        ))}
      </div>
      <div className="flex-1 flex min-h-0 relative">
        <div className="flex flex-col">
          <Sheet />
          <div className="relative flex-1 flex items-start pl-[12px] pt-[5px]">
            <div className="w-[560px] h-[3px] rounded-full bg-[#6e6e6e]" />
            <div className="absolute left-[1235px] top-0 w-[3px] h-[13px] bg-white" />
          </div>
          <div className="h-[17px] flex items-center pt-[2px] pl-[7px] text-[#e8e8e8]">
            <svg width="45" height="9" viewBox="0 0 45 9" fill="#e8e8e8"><path d="M1 0h1v9H1zM8 0v9L3 4.5zM20 0v9l-5-4.5zM27 0v9l5-4.5zM39 0v9l5-4.5zM44 0h1v9h-1z" /></svg>
            <Plus className="ml-[10px]" size={12} strokeWidth={3} />
            <div className="ml-[8px] w-[50px] h-[15px] border-b-2 border-white flex items-center justify-center text-[10px] font-bold">Arkusz1</div>
          </div>
        </div>
        <div className="ml-[5px] w-[3px] flex flex-col items-center">
          <div className="mt-[4px] w-[3px] h-[241px] bg-[#9a9a9a]" />
        </div>
        <div className="relative flex-1 ml-[5px]">
          <div className="absolute left-0 top-[241px] w-[4px] h-[35px] bg-white" />
        </div>
      </div>
      {/* status bar */}
      <div className="h-[15px] flex items-center bg-[#161616] border-t border-[#666666] text-[9.5px] text-[#cfcfcf] shrink-0">
        <div className="w-[26px] pl-[5px]">
          <svg width="12" height="12" viewBox="0 0 12 12" fill="#7a2f3c"><path d="M0 0h10l2 2v10H0z" /><rect x="3" y="1" width="6" height="3" fill="#1c1c1c" /><rect x="3" y="7" width="6" height="5" fill="#1c1c1c" /></svg>
        </div>
        <div className="w-[154px]">Arkusz 1 z 1</div>
        <div className="w-[286px] pl-[6px] border-l border-[#333333]">Zaznaczono: 1 wiersz, 4 kolumny</div>
        <div className="w-[156px] pl-[6px] border-l border-[#333333]">Domyślny</div>
        <div className="w-[140px] text-center border-l border-[#333333]">Polski</div>
        <div className="w-[48px] border-l border-[#333333] h-full" />
        <div className="w-[33px] h-full border-l border-[#333333] flex items-center pl-[6px] relative">
          <div className="w-[13px] h-[8px] border border-[#3a9ac0]" />
          <span className="absolute left-[23px] top-[-2px] text-[12px] text-white">I</span>
        </div>
        <div className="w-[19px] h-full border-l border-[#333333]" />
        <div className="w-[278px] text-center border-l border-[#333333] pl-[4px]">Średnia: ; Suma: 0</div>
        <div className="w-[112px] flex items-center pl-[6px] border-l border-[#333333] h-full">
          <div className="w-[7px] h-[2px] bg-white" />
          <div className="ml-[2px] w-[84px] h-px bg-[#dddddd] relative">
            <div className="absolute left-[46px] -top-[3px] w-[3px] h-[7px] bg-[#bbbbbb]" />
          </div>
          <Plus className="ml-px" size={9} strokeWidth={3} />
        </div>
        <div className="pl-[1px]">150%</div>
      </div>
      <Taskbar />
      {/* sidebar edge and tabs */}
      <div className="absolute left-[1250px] top-[85px] w-px h-[584px] bg-[#8a8a8a]" />
      <div className="absolute left-[1237px] top-[107px] w-[13px] h-[3px] bg-[#d8d8d8]" />
      <div className="absolute left-[1258px] top-[91px] w-[18px] flex flex-col items-center gap-[6px]">
        <div className="w-[9px] h-[7px] mb-[2px] border-t border-b border-[#cfcfcf] relative"><div className="absolute top-[2px] w-full h-px bg-[#cfcfcf]" /></div>
        <svg width="16" height="16" viewBox="0 0 16 16" fill="none" stroke="#cfcfcf"><rect x="1" y="1" width="14" height="14" /><path d="M1 4h14" /><path d="M4 8h8M4 11h8" stroke="#6ba5c9" /></svg>
        <svg width="18" height="18" viewBox="0 0 16 16" fill="none" stroke="#dddddd" strokeWidth="1.4"><path d="M1 12L5 2l4 10M2.5 8h5" /><path d="M9 14l5-6" stroke="#7fa8c4" strokeWidth="2" /></svg>
        <svg width="18" height="17" viewBox="0 0 16 15"><path d="M0 1h6l2 2h8v11H0z" fill="#c98a2e" /><rect x="7" y="7" width="9" height="8" fill="#3f87bd" /></svg>
        <svg width="17" height="17" viewBox="0 0 16 16" fill="none" stroke="#bdbdbd"><circle cx="8" cy="8" r="7" /><path d="M11 5L7 7 5 11l4-2z" fill="#3f87bd" stroke="none" /></svg>
        <span className="font-['Liberation_Serif',serif] italic text-[17px] leading-[17px] text-[#3f87bd]">fx</span>
      </div>
      <ColorPopup />
    </div>
  )
}
